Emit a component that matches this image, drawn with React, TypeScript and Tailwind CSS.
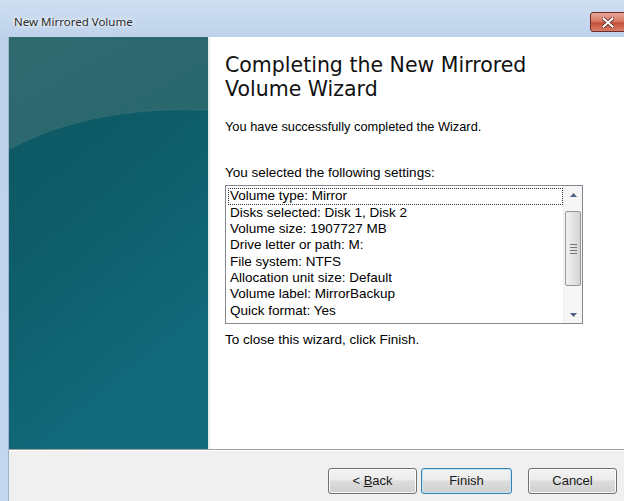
import React from 'react'

const settings = [
  'Volume type: Mirror',
  'Disks selected: Disk 1, Disk 2',
  'Volume size: 1907727 MB',
  'Drive letter or path: M:',
  'File system: NTFS',
  'Allocation unit size: Default',
  'Volume label: MirrorBackup',
  'Quick format: Yes',
]

// Side banner art of the wizard (teal with a soft curve)
function Banner() {
  return (
    <svg width="199" height="412" viewBox="0 0 199 412" preserveAspectRatio="none" className="block">
      <defs>
        <linearGradient id="top" x1="0" y1="0" x2="1" y2="1">
          <stop offset="0" stopColor="#2f6a6f" />
          <stop offset="1" stopColor="#28666d" />
        </linearGradient>
        <linearGradient id="bottom" x1="0" y1="0" x2="0.4" y2="1">
          <stop offset="0" stopColor="#0d5561" />
          <stop offset="0.5" stopColor="#0e5d6a" />
          <stop offset="1" stopColor="#126b7c" />
        </linearGradient>
      </defs>
      <rect width="199" height="412" fill="url(#bottom)" />
      <path d="M0 0 H199 V73 C130 70 60 80 0 112 Z" fill="url(#top)" />
      <path d="M0 112 C60 80 130 70 199 73" stroke="#377477" strokeWidth="1.5" fill="none" opacity="0.5" />
    </svg>
  )
}

function Btn({ children, primary, className }: { children: React.ReactNode; primary?: boolean; className: string }) {
  return (
    <button
      className={`${className} h-[26px] rounded-[3px] border text-[13px] text-[#1a1a1a] bg-[linear-gradient(#f3f3f3,#ececec_45%,#dddddd_50%,#cfcfcf)] ${
        primary
          ? 'border-[#3c7fb1] shadow-[inset_0_0_0_1px_#bfe4f8]'
          : 'border-[#707070] shadow-[inset_0_0_0_1px_#fcfcfc]'
      }`}
      style={{ fontFamily: '"Liberation Sans", Arial, sans-serif' }}
    >
      {children}
    </button>
  )
}

export default function App() {
  return (
    <div
      className="w-[624px] h-[501px] overflow-hidden flex flex-col bg-[linear-gradient(#cfdff2,#bcd1ea_8%,#c4d7ee)]"
      style={{ fontFamily: '"Liberation Sans", Arial, sans-serif' }}
    >
      {/* Title bar */}
      <div className="h-[37px] flex items-start relative">
        <span
          className="pl-[14px] pt-[13px] text-[11.5px] text-[#2a2a2a] [text-shadow:0_0_6px_#fff,0_0_3px_#fff]"
          style={{ fontFamily: '"Noto Sans", "Open Sans", sans-serif' }}
        >
          New Mirrored Volume
        </span>
        <div className="absolute left-[590px] top-[12px] w-[44px] h-[20px] rounded-[3px] border border-[#6d2c26] bg-[linear-gradient(#eba798,#d77a66_45%,#c4503a_55%,#d7806a)] flex items-center pl-[11px]">
          <svg width="12" height="11" viewBox="0 0 12 11">
            <path d="M1.5 1.5 L10.5 9.5 M10.5 1.5 L1.5 9.5" stroke="#5a2520" strokeWidth="3.6" strokeLinecap="square" />
            <path d="M1.5 1.5 L10.5 9.5 M10.5 1.5 L1.5 9.5" stroke="#ffffff" strokeWidth="2" strokeLinecap="square" />
          </svg>
        </div>
      </div>

      {/* Client area */}
      <div className="flex-1 flex pl-[8px]">
        <div className="flex-1 flex flex-col bg-[#f0f0f0] border-l border-[#9db3ce]">
          <div className="h-[412px] flex bg-white">
            <Banner />
            <div className="w-[3px] bg-[linear-gradient(90deg,#dfe7ea,#ffffff)]" />
            <div className="flex-1 pl-[14px] pr-[40px] pt-[16px] text-[13.5px] text-black">
              <h1
                className="text-[20.5px] leading-[24px] text-[#111]"
                style={{ fontFamily: '"DejaVu Sans", Verdana, sans-serif' }}
              >
                Completing the New Mirrored
                <br />
                Volume Wizard
              </h1>
              <p className="mt-[16px] text-[12.8px]">You have successfully completed the Wizard.</p>
              <p className="mt-[27px]">You selected the following settings:</p>

              <div className="mt-[2px] mr-[1px] h-[139px] border border-[#828790] flex bg-white">
                <div className="flex-1 pt-[2px] pl-[2px]">
                  {settings.map((s, i) => (
                    <div
                      key={s}
                      className={`h-[16.3px] leading-[16px] pl-[2px] ${
                        i === 0 ? 'outline outline-1 outline-dotted outline-[#333] -outline-offset-1' : ''
                      }`}
                    >
                      {s}
                    </div>
                  ))}
                </div>
                <div className="w-[19px] flex flex-col items-center bg-[#f6f6f6] border-l border-[#f0f0f0]">
                  <div className="h-[17px] flex items-center justify-center">
                    <svg width="7" height="4" viewBox="0 0 7 4"><path d="M0 4 L3.5 0 L7 4 Z" fill="#4d6185" /></svg>
                  </div>
                  <div className="mt-[8px] w-[16px] h-[75px] rounded-[2px] border border-[#979797] bg-[linear-gradient(90deg,#f1f1f1,#e4e4e4_50%,#d3d3d3)] flex flex-col items-center justify-center gap-[2px]">
                    <div className="w-[7px] h-[1px] bg-[#777]" />
                    <div className="w-[7px] h-[1px] bg-[#777]" />
                    <div className="w-[7px] h-[1px] bg-[#777]" />
                    <div className="w-[7px] h-[1px] bg-[#777]" />
                  </div>
                  <div className="flex-1" />
                  <div className="h-[17px] flex items-center justify-center">
                    <svg width="7" height="4" viewBox="0 0 7 4"><path d="M0 0 L3.5 4 L7 0 Z" fill="#4d6185" /></svg>
                  </div>
                </div>
              </div>

              <p className="mt-[6px]">To close this wizard, click Finish.</p>
            </div>
          </div>

          {/* Separator + buttons */}
          <div className="h-[1px] bg-[#a0a0a0]" />
          <div className="h-[1px] bg-white" />
          <div className="flex-1 flex items-start justify-end pt-[17px] pr-[7px]">
            <Btn className="w-[89px]">
              &lt; <span className="underline">B</span>ack
            </Btn>
            <Btn primary className="w-[91px] ml-[4px]">
              Finish
            </Btn>
            <Btn className="w-[89px] ml-[16px]">Cancel</Btn>
          </div>
        </div>
      </div>
    </div>
  )
}
